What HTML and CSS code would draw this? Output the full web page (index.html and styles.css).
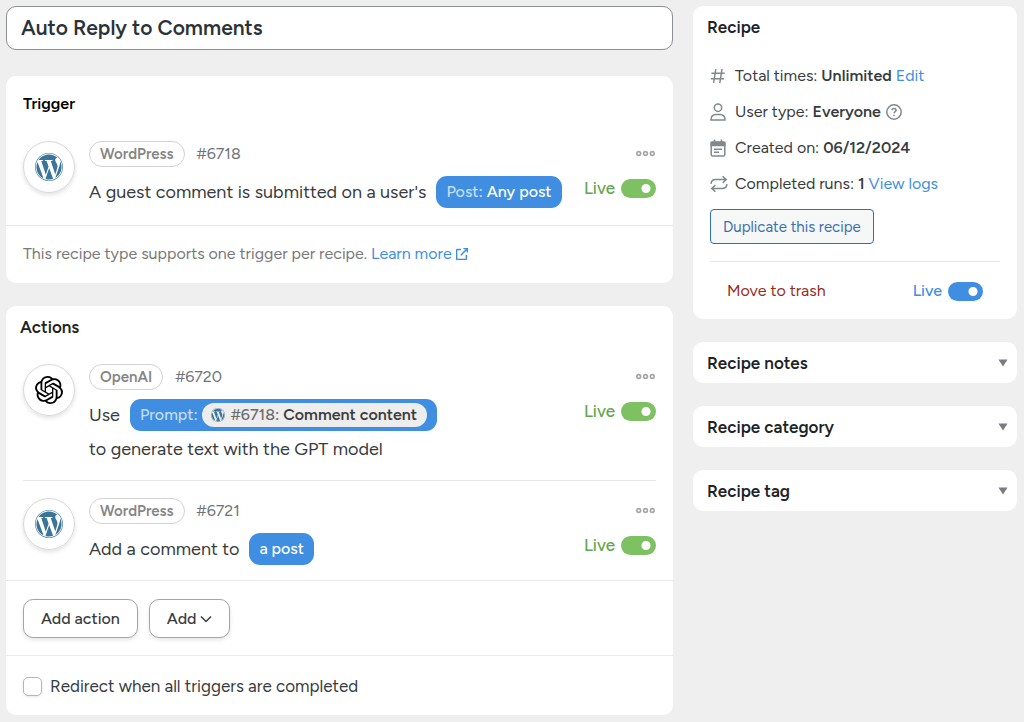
FILE: index.html
```html
<!DOCTYPE html>
<html lang="en">
<head>
    <meta charset="UTF-8">
    <meta name="viewport" content="width=device-width, initial-scale=1.0">
    <title>Auto Reply to Comments</title>
    <link rel="stylesheet" href="styles.css">
</head>
<body>
    <!-- shared logos -->
    <svg class="sprite" aria-hidden="true">
        <symbol id="wordpress" viewBox="0 0 24 24">
            <path fill-rule="evenodd" d="M21.469 6.825c.84 1.537 1.318 3.3 1.318 5.175 0 3.979-2.156 7.456-5.363 9.325l3.295-9.527c.615-1.54.82-2.771.82-3.864 0-.405-.026-.78-.07-1.11m-7.981.105c.647-.03 1.232-.105 1.232-.105.582-.075.514-.93-.067-.899 0 0-1.755.135-2.88.135-1.064 0-2.85-.15-2.85-.15-.585-.03-.661.855-.075.885 0 0 .54.061 1.125.09l1.68 4.605-2.37 7.08L5.354 6.9c.649-.03 1.234-.1 1.234-.1.585-.075.516-.93-.065-.896 0 0-1.746.138-2.874.138-.2 0-.438-.008-.69-.015C4.911 3.15 8.235 1.215 12 1.215c2.809 0 5.365 1.072 7.286 2.833-.046-.003-.091-.009-.141-.009-1.06 0-1.812.923-1.812 1.914 0 .89.513 1.643 1.06 2.531.411.72.89 1.643.89 2.977 0 .915-.354 1.994-.821 3.479l-1.075 3.585-3.9-11.61.001.014zM12 22.784c-1.059 0-2.081-.153-3.048-.437l3.237-9.406 3.315 9.087c.024.053.05.101.078.149-1.12.393-2.325.609-3.582.609M1.211 12c0-1.564.336-3.05.935-4.39L7.29 21.709C3.694 19.96 1.212 16.271 1.211 12M12 0C5.385 0 0 5.385 0 12s5.385 12 12 12 12-5.385 12-12S18.615 0 12 0m0 23.465C5.663 23.465.535 18.337.535 12S5.663.535 12 .535 23.465 5.663 23.465 12 18.337 23.465 12 23.465"/>
        </symbol>
        <symbol id="dots" viewBox="0 0 18 6">
            <g fill="none" stroke="currentColor" stroke-width="1.5">
                <circle cx="2.6" cy="3" r="1.8"/><circle cx="9" cy="3" r="1.8"/><circle cx="15.4" cy="3" r="1.8"/>
            </g>
        </symbol>
    </svg>

    <div class="layout">
        <main class="main">
            <input class="title" type="text" value="Auto Reply to Comments" aria-label="Recipe title">

            <section class="card trigger">
                <h2 class="card-title">Trigger</h2>
                <div class="item">
                    <span class="logo wp"><svg><use href="#wordpress"/></svg></span>
                    <div class="body">
                        <div class="meta"><span class="badge">WordPress</span><span class="id">#6718</span></div>
                        <div class="sentence">A guest comment is submitted on a user's
                            <button class="token" type="button"><span class="label">Post:</span> Any post</button>
                        </div>
                    </div>
                    <div class="side">
                        <button class="more" type="button" aria-label="More"><svg><use href="#dots"/></svg></button>
                        <label class="live">Live <input class="toggle" type="checkbox" checked></label>
                    </div>
                </div>
                <p class="note">This recipe type supports one trigger per recipe.
                    <a href="#">Learn more
                        <svg class="external" viewBox="0 0 12 12"><path d="M5 1.6H1.2a.6.6 0 0 0-.6.6v8.6c0 .3.3.6.6.6h8.6c.3 0 .6-.3.6-.6V7M7.4.6h4v4M11.2.8 4.8 7.2"/></svg></a>
                </p>
            </section>

            <section class="card actions">
                <h2 class="card-title">Actions</h2>
                <div class="item">
                    <span class="logo"><svg viewBox="0 0 24 24"><path d="M22.2819 9.8211a5.9847 5.9847 0 0 0-.5157-4.9108 6.0462 6.0462 0 0 0-6.5098-2.9A6.0651 6.0651 0 0 0 4.9807 4.1818a5.9847 5.9847 0 0 0-3.9977 2.9 6.0462 6.0462 0 0 0 .7427 7.0966 5.98 5.98 0 0 0 .511 4.9107 6.051 6.051 0 0 0 6.5146 2.9001A5.9847 5.9847 0 0 0 13.2599 24a6.0557 6.0557 0 0 0 5.7718-4.2058 5.9894 5.9894 0 0 0 3.9977-2.9001 6.0557 6.0557 0 0 0-.7475-7.0729zm-9.022 12.6081a4.4755 4.4755 0 0 1-2.8764-1.0408l.1419-.0804 4.7783-2.7582a.7948.7948 0 0 0 .3927-.6813v-6.7369l2.02 1.1686a.071.071 0 0 1 .038.052v5.5826a4.504 4.504 0 0 1-4.4945 4.4944zm-9.6607-4.1254a4.4708 4.4708 0 0 1-.5346-3.0137l.142.0852 4.783 2.7582a.7712.7712 0 0 0 .7806 0l5.8428-3.3685v2.3324a.0804.0804 0 0 1-.0332.0615L9.74 19.9502a4.4992 4.4992 0 0 1-6.1408-1.6464zM2.3408 7.8956a4.485 4.485 0 0 1 2.3655-1.9728V11.6a.7664.7664 0 0 0 .3879.6765l5.8144 3.3543-2.0201 1.1685a.0757.0757 0 0 1-.071 0l-4.8303-2.7865A4.504 4.504 0 0 1 2.3408 7.872zm16.5963 3.8558L13.1038 8.364 15.1192 7.2a.0757.0757 0 0 1 .071 0l4.8303 2.7913a4.4944 4.4944 0 0 1-.6765 8.1042v-5.6772a.79.79 0 0 0-.407-.667zm2.0107-3.0231l-.142-.0852-4.7735-2.7818a.7759.7759 0 0 0-.7854 0L9.409 9.2297V6.8974a.0662.0662 0 0 1 .0284-.0615l4.8303-2.7866a4.4992 4.4992 0 0 1 6.6802 4.66zM8.3065 12.863l-2.02-1.1638a.0804.0804 0 0 1-.038-.0567V6.0742a4.4992 4.4992 0 0 1 7.3757-3.4537l-.142.0805L8.704 5.459a.7948.7948 0 0 0-.3927.6813zm1.0976-2.3654l2.602-1.4998 2.6069 1.4998v2.9994l-2.5974 1.4997-2.6067-1.4997Z"/></svg></span>
                    <div class="body">
                        <div class="meta"><span class="badge">OpenAI</span><span class="id">#6720</span></div>
                        <div class="sentence">Use
                            <button class="token" type="button"><span class="label">Prompt:</span>
                                <span class="pill"><svg class="wp"><use href="#wordpress"/></svg><span>#6718: <b>Comment content</b></span></span>
                            </button>
                        </div>
                        <div class="sentence">to generate text with the GPT model</div>
                    </div>
                    <div class="side">
                        <button class="more" type="button" aria-label="More"><svg><use href="#dots"/></svg></button>
                        <label class="live">Live <input class="toggle" type="checkbox" checked></label>
                    </div>
                </div>
                <div class="item">
                    <span class="logo wp"><svg><use href="#wordpress"/></svg></span>
                    <div class="body">
                        <div class="meta"><span class="badge">WordPress</span><span class="id">#6721</span></div>
                        <div class="sentence">Add a comment to
                            <button class="token" type="button">a post</button>
                        </div>
                    </div>
                    <div class="side">
                        <button class="more" type="button" aria-label="More"><svg><use href="#dots"/></svg></button>
                        <label class="live">Live <input class="toggle" type="checkbox" checked></label>
                    </div>
                </div>
                <div class="buttons">
                    <button class="btn" type="button">Add action</button>
                    <button class="btn" type="button">Add
                        <svg class="chevron" viewBox="0 0 12 8"><path d="M1 1.5l5 5 5-5"/></svg>
                    </button>
                </div>
                <label class="redirect"><input type="checkbox"> Redirect when all triggers are completed</label>
            </section>
        </main>

        <aside class="sidebar">
            <section class="card recipe">
                <h2 class="card-title">Recipe</h2>
                <ul class="facts">
                    <li>
                        <svg viewBox="0 0 16 16"><path d="M5.8 1 3.6 15M12 1 9.8 15M1.5 5.2h13.2M.8 10.8H14"/></svg>
                        <span>Total times: <b>Unlimited</b> <a href="#">Edit</a></span>
                    </li>
                    <li>
                        <svg viewBox="0 0 16 18"><circle cx="8" cy="4.7" r="3.7"/><path d="M1 16.9c0-3.4 2-5.4 5-5.4h4c3 0 5 2 5 5.4z"/></svg>
                        <span>User type: <b>Everyone</b></span>
                        <svg class="help" viewBox="0 0 16 16"><circle cx="8" cy="8" r="7.2"/><path d="M5.9 6.3c.1-1.3 1-1.9 2.1-1.9s2.1.7 2.1 1.8c0 1.4-2 1.5-2 3"/><path d="M8 10.8v1.4"/></svg>
                    </li>
                    <li>
                        <svg viewBox="0 0 16 18"><path d="M4.5.5v4M11.5.5v4"/><rect x="1.2" y="3" width="13.6" height="14" rx="1.6"/><path d="M1.2 3.6h13.6v3H1.2z" fill="currentColor"/><path d="M4 10.2h8M4 13.2h5"/></svg>
                        <span>Created on: <b>06/12/2024</b></span>
                    </li>
                    <li>
                        <svg class="runs" viewBox="0 0 18 18"><path d="M12.6 1.2 16.2 4.6 12.6 8M16 4.6H5.5C3 4.6 1.3 6 1 8.8M5.4 10 1.8 13.4l3.6 3.4M2 13.4h10.5c2.5 0 4.2-1.4 4.5-4.2"/></svg>
                        <span>Completed runs: <b>1</b> <a href="#">View logs</a></span>
                    </li>
                </ul>
                <button class="duplicate" type="button">Duplicate this recipe</button>
                <div class="publish">
                    <a class="trash" href="#">Move to trash</a>
                    <label class="live blue">Live <input class="toggle" type="checkbox" checked></label>
                </div>
            </section>
            <button class="card panel" type="button">Recipe notes <svg viewBox="0 0 10 8"><path d="M.5.5h9L5 7.5z"/></svg></button>
            <button class="card panel" type="button">Recipe category <svg viewBox="0 0 10 8"><path d="M.5.5h9L5 7.5z"/></svg></button>
            <button class="card panel" type="button">Recipe tag <svg viewBox="0 0 10 8"><path d="M.5.5h9L5 7.5z"/></svg></button>
        </aside>
    </div>
</body>
</html>
```

FILE: styles.css
```css
* {
    box-sizing: border-box;
}

body {
    margin: 0;
    padding: 6px 7px 6px 6px;
    background: #efefef;
    color: #383c40;
    font: 16px/24px Figtree, Lato, sans-serif;
}

button, input {
    font: inherit;
    color: inherit;
}

button {
    cursor: pointer;
}

a {
    color: #3f8ee2;
    text-decoration: none;
}

b {
    font-weight: 600;
}

.sprite {
    display: none;
}

.layout {
    display: grid;
    grid-template-columns: 1fr 324px;
    gap: 20px;
    align-items: start;
}

.main {
    min-width: 0;
}

.title {
    display: block;
    width: 100%;
    height: 44px;
    margin-bottom: 26px;
    padding: 0 14px 1px;
    border: 1px solid #8c8f94;
    border-radius: 10px;
    background: #fff;
    color: #2c3338;
    font-size: 21px;
    font-weight: 600;
}

.card {
    border-radius: 10px;
    background: #fff;
}

.card-title {
    margin: 0;
    color: #1d2327;
    font-size: 17px;
    line-height: 24px;
    font-weight: 600;
}

.trigger {
    margin-bottom: 23px;
    padding-top: 16px;
}

.trigger .card-title {
    padding: 0 17px;
    color: #000;
    font-size: 16px;
}

.actions {
    padding-top: 9px;
}

.actions .card-title {
    padding: 0 14px;
}

/* trigger / action rows */
.item {
    display: flex;
    gap: 14px;
    margin: 0 17px;
    padding: 17px 0 16px;
}

.trigger .item {
    padding-top: 25px;
}

.actions .card-title + .item {
    padding-top: 25px;
    padding-bottom: 14px;
}

.item + .item {
    padding-bottom: 14px;
    border-top: 1px solid #e6e6e6;
}

.logo {
    display: grid;
    place-items: center;
    width: 52px;
    height: 52px;
    border: 1px solid #d8d8d8;
    border-radius: 50%;
    box-shadow: 0 2px 4px rgba(0, 0, 0, 0.12);
}

.logo svg {
    width: 28px;
    height: 28px;
}

.wp {
    fill: #3a7599;
}

.body {
    flex: 1;
}

.meta {
    display: flex;
    gap: 12px;
    height: 26px;
    margin-bottom: 8px;
    color: #6f7276;
}

.id {
    line-height: 26px;
}

.badge {
    padding: 0 10px;
    border: 1px solid #d2d2d2;
    border-radius: 13px;
    color: #858585;
    font-size: 15px;
    font-weight: 600;
}

.sentence {
    display: flex;
    align-items: center;
    gap: 10px;
    min-height: 34px;
    font-size: 18px;
}

.token {
    display: flex;
    align-items: center;
    gap: 4px;
    height: 32px;
    padding: 0 10px;
    border: 0;
    border-radius: 11px;
    background: #3f8ee2;
    color: #fff;
    font-size: 16px;
    font-weight: 500;
}

.label {
    color: #c5ddf6;
}

.pill {
    display: flex;
    align-items: center;
    gap: 6px;
    padding: 0 10px 0 9px;
    border-radius: 12px;
    background: #ededed;
    color: #6b6b6b;
}

.pill svg {
    width: 14px;
    height: 14px;
}

.pill b {
    color: #3c3c3c;
}

.side {
    display: flex;
    flex-direction: column;
    align-items: flex-end;
    gap: 10px;
}

.more {
    display: flex;
    align-items: center;
    height: 25px;
    padding: 0 1px;
    border: 0;
    background: none;
    color: #a5a5a5;
}

.more svg {
    width: 19px;
    height: 7px;
}

.live {
    display: flex;
    align-items: center;
    gap: 6px;
    color: #63a64d;
    font-size: 17px;
    font-weight: 500;
}

.toggle {
    width: 35px;
    height: 19px;
    margin: 0;
    border-radius: 10px;
    appearance: none;
    background: radial-gradient(circle at 25px 50%, #fff 4px, transparent 5px) #7dc163;
}

.blue {
    color: #3f8ee2;
    font-size: 16px;
}

.blue .toggle {
    background-color: #3f8ee2;
}

.note {
    margin: 0;
    padding: 16px 17px 17px;
    border-top: 1px solid #e6e6e6;
    color: #797979;
}

.external {
    width: 12px;
    height: 12px;
    vertical-align: -1px;
}

.external, .chevron, .facts svg {
    fill: none;
    stroke: currentColor;
    stroke-width: 1.5;
}

.buttons {
    display: flex;
    gap: 11px;
    padding: 18px 17px 17px;
    border: solid #eaeaea;
    border-width: 1px 0;
}

.btn {
    height: 39px;
    padding: 0 17px;
    border: 1px solid #a5a5a5;
    border-radius: 10px;
    background: #fff;
    box-shadow: 0 2px 4px rgba(0, 0, 0, 0.1);
    font-weight: 500;
}

.chevron {
    width: 12px;
    height: 8px;
    vertical-align: 1px;
}

.redirect {
    display: flex;
    align-items: center;
    gap: 8px;
    padding: 18px 17px 17px;
    font-size: 17px;
}

.redirect input {
    width: 19px;
    height: 19px;
    margin: 0;
    border: 1px solid #b5b5b5;
    border-radius: 5px;
    appearance: none;
    box-shadow: 0 1px 3px rgba(0, 0, 0, 0.1);
}

.redirect input:checked {
    background: #3f8ee2;
}

/* sidebar */
.sidebar {
    display: grid;
    gap: 23px;
}

.recipe {
    padding: 9px 17px 16px;
}

.recipe .card-title {
    margin: 0 -3px 25px;
}

.facts {
    display: grid;
    gap: 12px;
    margin: 0 0 13px;
    padding: 0;
    list-style: none;
}

.facts li {
    display: flex;
    align-items: center;
    gap: 9px;
}

.facts svg {
    width: 16px;
    height: 18px;
    color: #83888d;
}

.facts .help {
    margin-left: -4px;
}

.facts .runs {
    width: 18px;
    margin-right: -2px;
}

.duplicate {
    height: 35px;
    padding: 0 12px;
    border: 1px solid #2f6fb3;
    border-radius: 4px;
    background: #f6f7f7;
    color: #3a72b0;
    font-size: 15px;
}

.publish {
    display: flex;
    align-items: center;
    justify-content: space-between;
    margin-top: 17px;
    padding: 17px 17px 0;
    border-top: 1px solid #e6e6e6;
}

.trash {
    color: #9a2a22;
}

.panel {
    display: flex;
    align-items: center;
    justify-content: space-between;
    height: 41px;
    padding: 0 9px 0 14px;
    border: 0;
    color: #1d2327;
    font-size: 17px;
    font-weight: 600;
}

.panel svg {
    width: 10px;
    height: 8px;
    fill: #787c82;
}
```
